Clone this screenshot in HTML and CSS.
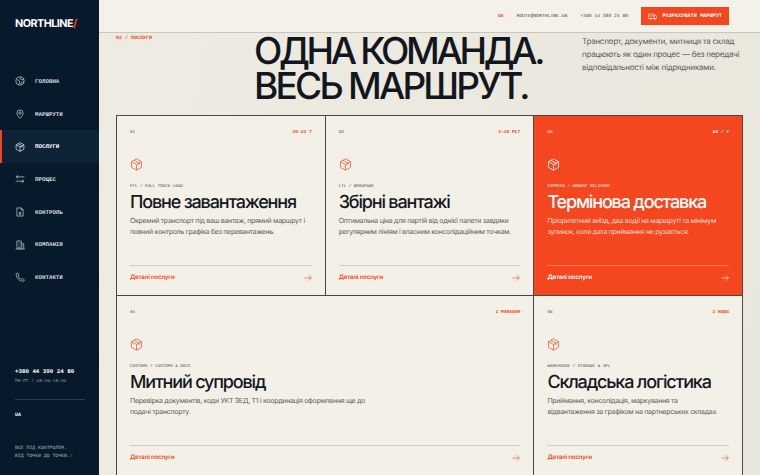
FILE: index.html
```html
<!DOCTYPE html>
<html lang="uk">
<head>
  <title>NORTHLINE / Послуги</title>
  <meta charset="utf-8">
  <link rel="stylesheet" href="styles.css">
</head>
<body>
  <svg class="defs" width="0" height="0">
    <symbol id="box" viewBox="0 0 16 16">
      <path d="M8 1 14.200 4.500V11.500L8 15 1.800 11.500V4.500Z M1.800 4.500 8 8 14.200 4.500 M8 8V15 M4.900 2.800 11.100 6.300V9" fill="none" stroke="currentColor"/>
    </symbol>
    <symbol id="arrow" viewBox="0 0 10 10">
      <path d="M.5 5H9.200 M5.800 1.600 9.200 5 5.800 8.400" fill="none" stroke="currentColor" stroke-width=".8"/>
    </symbol>
  </svg>

  <aside class="sidebar">
    <div class="logo">NORTHLINE<span>/</span></div>
    <nav class="nav">
      <a class="nav-item">
        <svg viewBox="0 0 16 16"><circle cx="8" cy="8" r="6.500"/><path d="M2.500 5.500 6 7l1.500 2.500L6 14 M8.500 1.600 8 4.500l3 1.500 3.400-.6 M10 14l-.5-3 2-1.500 3 .5"/></svg>
        <span>ГОЛОВНА</span>
      </a>
      <a class="nav-item">
        <svg viewBox="0 0 16 16"><path d="M8 15C5 12 3 9.500 3 6.500a5 5 0 0 1 10 0C13 9.500 11 12 8 15Z"/><circle cx="8" cy="6.500" r="2"/></svg>
        <span>МАРШРУТИ</span>
      </a>
      <a class="nav-item active">
        <svg><use href="#box"/></svg>
        <span>ПОСЛУГИ</span>
      </a>
      <a class="nav-item">
        <svg viewBox="0 0 16 16"><path d="M15 4.500H2 M5 2 2 4.500 5 7 M1 11.500H14 M11 9l3 2.500-3 2.500"/></svg>
        <span>ПРОЦЕС</span>
      </a>
      <a class="nav-item">
        <svg viewBox="0 0 16 16"><path d="M3 1.500H10L13 4.500V14.500H3Z M10 1.500V4.500H13 M6 8.500H10 M6 10.500H10 M6 12.500H10"/></svg>
        <span>КОНТРОЛЬ</span>
      </a>
      <a class="nav-item">
        <svg viewBox="0 0 16 16"><path d="M3 14.500V1.500H10V14.500 M10 6H14V14.500 M1 14.500H15.500 M5 4H6 M7.500 4H8.500 M5 7H6 M7.500 7H8.500 M5 10H6 M7.500 10H8.500 M6 14.500V12H7.500V14.500 M11.500 9H12.500 M11.500 11.500H12.500"/></svg>
        <span>КОМПАНІЯ</span>
      </a>
      <a class="nav-item">
        <svg viewBox="0 0 16 16"><path d="M2 2.500 4.500 1.500 6.500 5 5 6.500C6 9 8 11 10.500 11.500L12 10.500 15 12.500 14 14.500C12.500 15 9 15 5.500 11.500 2.500 8.500 1.500 5 2 2.500Z"/></svg>
        <span>КОНТАКТИ</span>
      </a>
    </nav>
    <div class="side-foot">
      <div class="side-phone">+380 44 390 24 80</div>
      <div class="side-hours">ПН-ПТ / 08:00-18:00</div>
      <div class="side-lang">UA</div>
      <div class="side-note">ВСЕ ПІД КОНТРОЛЕМ.<br>ВІД ТОЧКИ ДО ТОЧКИ.<span>/</span></div>
    </div>
  </aside>

  <main class="main">
    <header class="topbar">
      <span class="lang">UA</span>
      <span class="top-text">ROUTE@NORTHLINE.UA</span>
      <span class="top-text">+380 44 390 24 80</span>
      <a class="cta">
        <svg viewBox="0 0 16 12"><path d="M1 1.500H11V9.500H1Z M11 4H14L15.500 6.500V9.500H11 M1 5H11"/><circle cx="4.500" cy="10" r="1.300"/><circle cx="12" cy="10" r="1.300"/></svg>
        РОЗРАХУВАТИ МАРШРУТ
      </a>
    </header>

    <section class="intro">
      <div class="crumb">02 / ПОСЛУГИ</div>
      <h1>ОДНА КОМАНДА.<br><span>ВЕСЬ МАРШРУТ.</span></h1>
      <p>Транспорт, документи, митниця та склад працюють як один процес — без передачі відповідальності між підрядниками.</p>
    </section>

    <section class="cards">
      <article class="card">
        <div class="card-top"><span>01</span><span class="tag">20–22 T</span></div>
        <svg class="card-icon"><use href="#box"/></svg>
        <div class="card-kicker">FTL / FULL TRUCK LOAD</div>
        <h2>Повне завантаження</h2>
        <p>Окремий транспорт під ваш вантаж, прямий маршрут і повний контроль графіка без перевантажень.</p>
        <a class="card-link">Деталі послуги<svg><use href="#arrow"/></svg></a>
      </article>
      <article class="card">
        <div class="card-top"><span>02</span><span class="tag">1–10 PLT</span></div>
        <svg class="card-icon"><use href="#box"/></svg>
        <div class="card-kicker">LTL / GROUPAGE</div>
        <h2>Збірні вантажі</h2>
        <p>Оптимальна ціна для партій від однієї палети завдяки регулярним лініям і власним консолідаційним точкам.</p>
        <a class="card-link">Деталі послуги<svg><use href="#arrow"/></svg></a>
      </article>
      <article class="card hot">
        <div class="card-top"><span>03</span><span class="tag">24 / 7</span></div>
        <svg class="card-icon"><use href="#box"/></svg>
        <div class="card-kicker">EXPRESS / URGENT DELIVERY</div>
        <h2>Термінова доставка</h2>
        <p>Пріоритетний виїзд, два водії на маршруті та мінімум зупинок, коли дата приймання не рухається.</p>
        <a class="card-link">Деталі послуги<svg><use href="#arrow"/></svg></a>
      </article>
      <article class="card wide">
        <div class="card-top"><span>04</span><span class="tag">1 MANAGER</span></div>
        <svg class="card-icon"><use href="#box"/></svg>
        <div class="card-kicker">CUSTOMS / CUSTOMS &amp; DOCS</div>
        <h2>Митний супровід</h2>
        <p>Перевірка документів, коди УКТ ЗЕД, T1 і координація оформлення ще до подачі транспорту.</p>
        <a class="card-link">Деталі послуги<svg><use href="#arrow"/></svg></a>
      </article>
      <article class="card">
        <div class="card-top"><span>05</span><span class="tag">2 HUBS</span></div>
        <svg class="card-icon"><use href="#box"/></svg>
        <div class="card-kicker">WAREHOUSE / STORAGE &amp; 3PL</div>
        <h2>Складська логістика</h2>
        <p>Приймання, консолідація, маркування та відвантаження за графіком на партнерських складах.</p>
        <a class="card-link">Деталі послуги<svg><use href="#arrow"/></svg></a>
      </article>
    </section>
  </main>
</body>
</html>
```

FILE: styles.css
```css
* {
  box-sizing: border-box;
}
body {
  margin: 0;
  display: flex;
  height: 475px;
  overflow: hidden;
  background-color: #ebe8de;
  color: #14181d;
  font-family: Inter, "Liberation Sans", sans-serif;
  text-rendering: geometricPrecision;
}
.defs {
  position: absolute;
}
.sidebar {
  flex: 0 0 99px;
  display: flex;
  flex-direction: column;
  background-color: #071a2b;
  color: #fff;
}
.logo {
  height: 65px;
  padding: 16px 0 0 15px;
  font-size: 10.800px;
  line-height: 15px;
  font-weight: 700;
  letter-spacing: -0.05em;
}
.logo span, .side-note span {
  color: #f4471f;
}
.nav {
  display: flex;
  flex-direction: column;
}
.nav-item {
  display: flex;
  align-items: center;
  gap: 10px;
  height: 32.700px;
  padding-left: 15px;
  font-family: "Liberation Mono", monospace;
  font-size: 5.800px;
  font-weight: 700;
  color: #d3d9de;
}
.nav-item svg {
  flex: none;
  width: 10px;
  height: 10px;
  fill: none;
  stroke: #dfe3e6;
  stroke-width: 1;
}
.nav-item.active {
  padding-left: 13px;
  background-color: #0e2336;
  border-left: 2px solid #f4471f;
  color: #fff;
}
.side-foot {
  margin-top: auto;
  padding: 0 14px 14px 15px;
  font-family: "Liberation Mono", monospace;
}
.side-phone {
  font-size: 5.800px;
  font-weight: 700;
  line-height: 10px;
  white-space: nowrap;
}
.side-hours {
  padding-bottom: 12px;
  border-bottom: 1px solid #2a3a48;
  font-size: 4.500px;
  line-height: 10px;
  color: #8c98a3;
}
.side-lang {
  margin-top: 11px;
  font-size: 5px;
  font-weight: 700;
  line-height: 8px;
}
.side-note {
  margin-top: 26px;
  font-size: 4.800px;
  line-height: 8px;
  color: #aab3bb;
  white-space: nowrap;
}
.main {
  flex: 1;
  min-width: 0;
  background: linear-gradient(100deg, #eeebe2, #e9e6dc);
}
.topbar {
  display: flex;
  align-items: center;
  justify-content: flex-end;
  gap: 13px;
  height: 33px;
  padding-right: 31px;
  background-color: #f4f1ea;
  border-bottom: 1px solid #c9c6bd;
  font-family: "Liberation Mono", monospace;
  font-size: 4.700px;
}
.lang {
  color: #f4471f;
  font-weight: 700;
}
.top-text {
  color: #45474a;
}
.cta {
  display: flex;
  align-items: center;
  gap: 5px;
  height: 18px;
  padding: 0 7px;
  background-color: #f4471f;
  color: #fff;
  font-size: 5.250px;
  font-weight: 700;
}
.cta svg {
  width: 9px;
  height: 7px;
  fill: none;
  stroke: #fff;
  stroke-width: 1;
}
.intro {
  display: grid;
  grid-template-columns: 138px 328px 1fr;
  height: 82px;
  padding-left: 17px;
}
.crumb {
  padding-top: 1px;
  font-family: "Liberation Mono", monospace;
  font-size: 5px;
  line-height: 8px;
  font-weight: 700;
  color: #f4471f;
}
.intro h1 {
  margin: 0;
  font-size: 37px;
  line-height: 35px;
  font-weight: 500;
  letter-spacing: -0.09em;
  white-space: nowrap;
  color: #12171e;
}
.intro h1 span {
  letter-spacing: -0.075em;
}
.intro p {
  margin: 0;
  padding-top: 2px;
  font-size: 8px;
  line-height: 13px;
  letter-spacing: -0.260px;
  color: #5b5c5c;
}
.cards {
  display: grid;
  grid-template-columns: repeat(3, 208.700px);
  grid-auto-rows: 180px;
  margin-left: 17px;
}
.card {
  display: flex;
  flex-direction: column;
  margin: 0 -1px -1px 0;
  padding: 13px 13px 0;
  background-color: #f3f0e8;
  border: 1px solid #4a4843;
}
.wide {
  grid-column: span 2;
}
.card-top {
  display: flex;
  justify-content: space-between;
  font-family: "Liberation Mono", monospace;
  font-size: 4.300px;
  line-height: 8px;
  color: #45474a;
}
.tag {
  color: #f4471f;
  font-size: 4.600px;
  font-weight: 700;
}
.card-icon {
  width: 13px;
  height: 13px;
  margin-top: 20.500px;
  color: #e9623f;
}
.card-kicker {
  margin-top: 12.500px;
  font-family: "Liberation Mono", monospace;
  font-size: 4.200px;
  line-height: 8px;
  color: #45474a;
}
.card h2 {
  margin: 1px 0 0;
  font-size: 18px;
  line-height: 22px;
  font-weight: 500;
  letter-spacing: -0.065em;
  white-space: nowrap;
}
.card p {
  max-width: 178px;
  margin: 2px 0 0;
  font-size: 7px;
  line-height: 10.700px;
  letter-spacing: -0.300px;
  color: #5f6060;
}
.wide p {
  max-width: 240px;
}
.card-link {
  display: flex;
  align-items: center;
  justify-content: space-between;
  margin-top: auto;
  margin-bottom: 13px;
  padding-top: 7px;
  border-top: 1px solid #cfccc4;
  font-size: 6.200px;
  line-height: 9px;
  font-weight: 600;
  letter-spacing: -0.200px;
  color: #f4471f;
}
.card-link svg {
  width: 8px;
  height: 8px;
}
.hot {
  background-color: #f4471f;
  color: #fff;
}
.hot .card-top, .hot .tag, .hot .card-kicker, .hot .card-icon, .hot .card-link {
  color: #fff;
}
.hot p {
  color: #ffd9cd;
}
.hot .card-link {
  border-top-color: #f77d5e;
}
```
